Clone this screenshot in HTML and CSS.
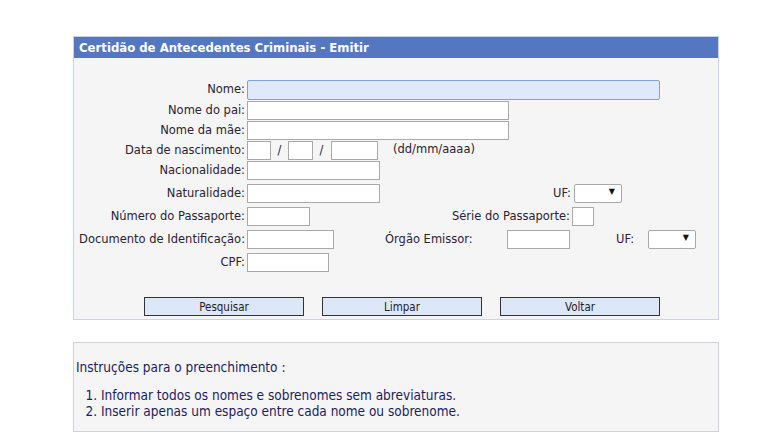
FILE: index.html
```html
<!DOCTYPE html>
<html lang="pt-BR">
<head>
<meta charset="utf-8">
<title>Certidão de Antecedentes Criminais - Emitir</title>
<link rel="stylesheet" href="styles.css">
</head>
<body>
<div class="page">
  <div class="panel">
    <div class="panel-head">Certidão de Antecedentes Criminais - Emitir</div>
    <div class="panel-body">
      <div class="row r-first">
        <span class="lbl">Nome:</span>
        <input class="fld focus w-nome" type="text">
      </div>
      <div class="row">
        <span class="lbl">Nome do pai:</span>
        <input class="fld w-pai" type="text">
      </div>
      <div class="row">
        <span class="lbl">Nome da mãe:</span>
        <input class="fld w-pai" type="text">
      </div>
      <div class="row">
        <span class="lbl">Data de nascimento:</span>
        <input class="fld w-dd" type="text">
        <span class="slash">/</span>
        <input class="fld w-mm" type="text">
        <span class="slash">/</span>
        <input class="fld w-aaaa" type="text">
        <span class="hint">(dd/mm/aaaa)</span>
      </div>
      <div class="row r-tall">
        <span class="lbl">Nacionalidade:</span>
        <input class="fld w-nac" type="text">
      </div>
      <div class="row r-tall">
        <span class="lbl">Naturalidade:</span>
        <input class="fld w-nac" type="text">
        <span class="lbl2 uf1">UF:</span>
        <span class="sel"><select><option></option></select></span>
      </div>
      <div class="row r-tall">
        <span class="lbl">Número do Passaporte:</span>
        <input class="fld w-pass" type="text">
        <span class="lbl2 serie">Série do Passaporte:</span>
        <input class="fld w-serie" type="text">
      </div>
      <div class="row r-tall">
        <span class="lbl">Documento de Identificação:</span>
        <input class="fld w-doc" type="text">
        <span class="lbl3 orgao">Órgão Emissor:</span>
        <input class="fld w-org" type="text">
        <span class="lbl3 uf2">UF:</span>
        <span class="sel"><select><option></option></select></span>
      </div>
      <div class="row">
        <span class="lbl">CPF:</span>
        <input class="fld w-cpf" type="text">
      </div>
    </div>
    <div class="actions">
      <button class="btn" type="button">Pesquisar</button>
      <button class="btn" type="button">Limpar</button>
      <button class="btn" type="button">Voltar</button>
    </div>
  </div>

  <div class="info">
    <p class="info-title">Instruções para o preenchimento :</p>
    <ol class="info-list">
      <li>Informar todos os nomes e sobrenomes sem abreviaturas.</li>
      <li>Inserir apenas um espaço entre cada nome ou sobrenome.</li>
    </ol>
  </div>
</div>
</body>
</html>
```

FILE: styles.css
```css
html, body {
  margin: 0;
  padding: 0;
  background: #ffffff;
}

body {
  font-family: "DejaVu Sans", Verdana, sans-serif;
  font-size: 11.5px;
  color: #2b2233;
}

.page {
  padding: 36px 0 0 73px;
  width: 646px;
}

.panel {
  border: 1px solid #c6d3e8;
  background: #f5f5f5;
}

.panel-head {
  background: #5577c1;
  color: #ffffff;
  font-family: "DejaVu Sans Condensed", "DejaVu Sans", sans-serif;
  font-weight: bold;
  font-size: 13px;
  height: 21px;
  line-height: 21px;
  padding-left: 5px;
}

.panel-body {
  padding-top: 22px;
  display: flex;
  flex-direction: column;
}

.row {
  display: flex;
  align-items: flex-start;
  height: 20px;
}

.r-first { height: 21px; }
.r-tall { height: 23px; }

.lbl {
  width: 171px;
  text-align: right;
  line-height: 19px;
  white-space: nowrap;
  padding-right: 2px;
}

.fld {
  box-sizing: border-box;
  height: 19px;
  margin: 0;
  padding: 1px 2px;
  border: 1px solid #a9a9a9;
  background: #ffffff;
  font: inherit;
  outline: none;
}

.fld.focus {
  background: #dfe9fb;
  border-color: #7da2dd;
  border-radius: 2px;
  height: 20px;
}

.w-nome { width: 413px; }
.w-pai { width: 262px; }
.w-dd { width: 24px; }
.w-mm { width: 25px; }
.w-aaaa { width: 47px; }
.w-nac { width: 133px; }
.w-pass { width: 63px; }
.w-serie { width: 22px; }
.w-doc { width: 87px; }
.w-org { width: 63px; }
.w-cpf { width: 82px; }

.slash {
  width: 17px;
  text-align: center;
  line-height: 19px;
}
.slash + .w-aaaa { margin-left: 1px; }

.hint {
  margin-left: 15px;
  line-height: 17px;
}

.lbl2 {
  text-align: right;
  line-height: 19px;
  white-space: nowrap;
}
.uf1 { width: 191px; margin-right: 3px; }
.serie { width: 260px; margin-right: 2px; }

.lbl3 {
  text-align: left;
  line-height: 19px;
  white-space: nowrap;
}
.orgao { margin-left: 51px; width: 122px; }
.uf2 { margin-left: 46px; width: 32px; }

.sel {
  position: relative;
  display: inline-block;
  width: 48px;
  height: 19px;
}
.sel select {
  -webkit-appearance: none;
  appearance: none;
  box-sizing: border-box;
  width: 48px;
  height: 19px;
  margin: 0;
  border: 1px solid #a9a9a9;
  border-radius: 2px;
  background: #ffffff;
  font: inherit;
}
.sel::after {
  content: "▼";
  position: absolute;
  right: 7px;
  top: 3px;
  font-size: 8px;
  color: #111;
  pointer-events: none;
}

.actions {
  display: flex;
  gap: 18px;
  padding: 24px 0 3px 70px;
}

.btn {
  box-sizing: border-box;
  width: 160px;
  height: 19px;
  margin: 0;
  padding: 0;
  border: 1px solid #333333;
  background: #dde7fa;
  color: #222;
  font-family: "DejaVu Sans Condensed", "DejaVu Sans", sans-serif;
  font-size: 11.5px;
}

.info {
  margin-top: 22px;
  border: 1px solid #c9d3e3;
  background: #f5f5f5;
  height: 88px;
  color: #1c1c5e;
  font-family: "DejaVu Sans Condensed", "DejaVu Sans", sans-serif;
  font-size: 13.5px;
}

.info-title {
  margin: 16px 0 0 2px;
  line-height: 16px;
}

.info-list {
  margin: 12px 0 0 0;
  padding-left: 27px;
  line-height: 16px;
}
```
